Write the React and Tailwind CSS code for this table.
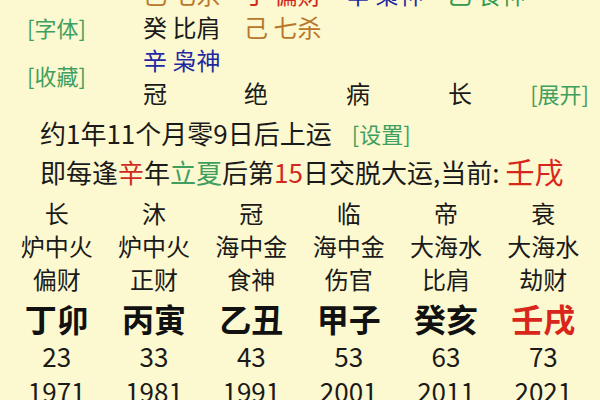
import React from "react";

const hidden = [
  [
    { t: "己 七杀", c: "text-[#b8772c]" },
    { t: "丁 偏财", c: "text-[#d02a1f]" },
    { t: "辛 枭神", c: "text-[#1f28a3]" },
    { t: "乙 食神", c: "text-[#2f9a4c]" },
  ],
  [
    { t: "癸 比肩", c: "text-[#1a1a1a]" },
    { t: "己 七杀", c: "text-[#b8772c]" },
  ],
  [{ t: "辛 枭神", c: "text-[#1f28a3]" }],
];

const stages = ["长", "沐", "冠", "临", "帝", "衰"];
const nayin = ["炉中火", "炉中火", "海中金", "海中金", "大海水", "大海水"];
const gods = ["偏财", "正财", "食神", "伤官", "比肩", "劫财"];
const pillars = ["丁卯", "丙寅", "乙丑", "甲子", "癸亥", "壬戌"];
const ages = ["23", "33", "43", "53", "63", "73"];
const years = ["1971", "1981", "1991", "2001", "2011", "2021"];

function Row({ items, h, cls = "" }) {
  return (
    <div className={`grid grid-cols-6 px-[8px] ${h}`}>
      {items.map((v, i) => (
        <div
          key={i}
          className={`flex items-center justify-center leading-none whitespace-nowrap ${
            typeof cls === "function" ? cls(i) : cls
          }`}
        >
          {v}
        </div>
      ))}
    </div>
  );
}

export default function App() {
  return (
    <div className="w-[600px] h-[400px] overflow-hidden bg-[#fcf8cf] text-[#1a1a1a] font-['Noto_Sans_CJK_SC',sans-serif]">
      {/* 藏干 */}
      <div className="flex -mt-[23px]">
        <div className="w-[143px] shrink-0 pl-[27px] text-[22px] text-[#3f9f5f]">
          <div className="h-[33px]" />
          <div className="h-[33px] flex items-center leading-none">[字体]</div>
          <div className="h-[33px] mt-[15px] flex items-center leading-none">[收藏]</div>
        </div>
        <div className="flex-1 text-[24px]">
          {hidden.map((row, r) => (
            <div key={r} className="h-[33px] grid grid-cols-[101px_102px_102px_1fr]">
              {row.map((x, i) => (
                <div key={i} className={`flex items-center leading-none whitespace-nowrap ${x.c}`}>
                  {x.t}
                </div>
              ))}
            </div>
          ))}
          <div className="h-[33px] grid grid-cols-[101px_102px_102px_1fr]">
            <div className="flex items-center leading-none">冠</div>
            <div className="flex items-center leading-none">绝</div>
            <div className="flex items-center leading-none">病</div>
            <div className="flex items-center justify-between pr-[11px] leading-none">
              <span>长</span>
              <span className="text-[22px] text-[#3f9f5f]">[展开]</span>
            </div>
          </div>
        </div>
      </div>

      {/* 起运 */}
      <div className="mt-[4px] h-[39px] pl-[40px] flex items-center text-[26px] leading-none whitespace-nowrap">
        <span>约1年11个月零9日后上运</span>
        <span className="ml-[20px] text-[22px] text-[#3f9f5f]">[设置]</span>
      </div>
      <div className="h-[39px] pl-[40px] flex items-center text-[26px] leading-none whitespace-nowrap">
        <span>即每逢</span>
        <span className="text-[#d02a1f]">辛</span>
        <span>年</span>
        <span className="text-[#3f9f5f]">立夏</span>
        <span>后第</span>
        <span className="text-[#d02a1f]">15</span>
        <span>日交脱大运,当前: </span>
        <span className="ml-[6px] text-[29px] text-[#d8261c]">壬戌</span>
      </div>

      {/* 大运 */}
      <div className="mt-[5px]">
        <Row items={stages} h="h-[33px]" cls="text-[24px]" />
        <Row items={nayin} h="h-[33px]" cls="text-[24px]" />
        <Row items={gods} h="h-[33px]" cls="text-[24px]" />
        <Row
          items={pillars}
          h="h-[45px]"
          cls={(i) => `text-[32px] font-bold ${i === 5 ? "text-[#d8261c]" : "text-[#111]"}`}
        />
        <Row items={ages} h="h-[31px]" cls="text-[26px]" />
        <Row items={years} h="h-[39px]" cls="text-[26px]" />
      </div>
    </div>
  );
}
